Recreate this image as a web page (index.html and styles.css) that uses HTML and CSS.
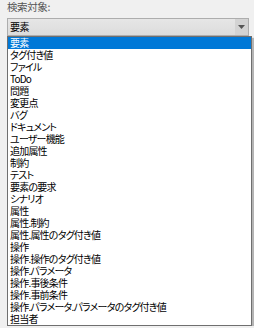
FILE: index.html
```html
<!DOCTYPE html>
<html>
<head>
    <meta charset="utf-8">
    <title>検索対象</title>
<link rel="stylesheet" href="styles.css">
</head>
<body>
<div class="field">
    <div class="label">検索対象:</div>
    <div class="combo">
        <span class="value">要素</span>
        <span class="arrow">
            <svg width="7" height="4" viewBox="0 0 7 4"><path d="M0 0h7L3.5 4z" fill="#555"/></svg>
        </span>
    </div>
    <ul class="list">
        <li class="selected">要素</li>
        <li>タグ付き値</li>
        <li>ファイル</li>
        <li>ToDo</li>
        <li>問題</li>
        <li>変更点</li>
        <li>バグ</li>
        <li>ドキュメント</li>
        <li>ユーザー機能</li>
        <li>追加属性</li>
        <li>制約</li>
        <li>テスト</li>
        <li>要素の要求</li>
        <li>シナリオ</li>
        <li>属性</li>
        <li>属性.制約</li>
        <li>属性.属性のタグ付き値</li>
        <li>操作</li>
        <li>操作.操作のタグ付き値</li>
        <li>操作.パラメータ</li>
        <li>操作.事後条件</li>
        <li>操作.事前条件</li>
        <li>操作.パラメータ.パラメータのタグ付き値</li>
        <li>担当者</li>
    </ul>
</div>
</body>
</html>
```

FILE: styles.css
```css
*
{
  margin: 0;
  padding: 0;
  box-sizing: border-box;
}

body
{
  font-family: "Noto Sans CJK JP", "Noto Sans", sans-serif;
  font-feature-settings: "palt";
  background: #f0f0f0;
  overflow: hidden;
}

div.field
{
  padding-left: 7px;
}

div.label
{
  height: 18px;
  font-size: 10.5px;
  line-height: 14px;
  color: #555;
  letter-spacing: -0.4px;
}

div.combo
{
  display: flex;
  align-items: center;
  width: 242px;
  height: 18px;
  border: 1px solid #adadad;
  background: linear-gradient(#e6e6e6, #dcdcdc);
  font-size: 10px;
  color: #000;
}

div.combo .value
{
  flex: 1;
  padding-left: 2px;
  line-height: 16px;
  letter-spacing: -0.5px;
}

div.combo .arrow
{
  display: flex;
  align-items: center;
  justify-content: center;
  width: 13px;
  height: 16px;
  background: #d3d3d3;
}

ul.list
{
  list-style: none;
  width: 245px;
  border: 1px solid #6f6f6f;
  background: #fff;
  box-shadow: 2px 2px 1px rgba(0, 0, 0, 0.25);
  font-size: 10px;
  color: #000;
}

ul.list li
{
  height: 12px;
  line-height: 12px;
  padding-left: 2px;
  white-space: nowrap;
  letter-spacing: -0.8px;
}

ul.list li.selected
{
  background: #0078d7;
  color: #fff;
}
```
